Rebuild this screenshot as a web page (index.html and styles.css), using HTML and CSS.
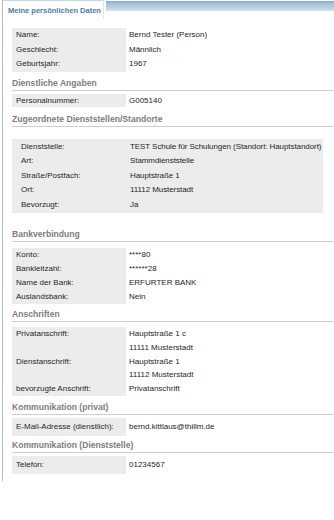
FILE: index.html
```html
<!DOCTYPE html>
<html lang="de">
<head>
<meta charset="utf-8">
<title>Meine persönlichen Daten</title>
<link rel="stylesheet" href="styles.css">
</head>
<body>
<div class="panel">
  <div class="tabbar">
    <div class="tab">Meine persönlichen Daten</div>
    <div class="tabfill"></div>
  </div>
  <div class="content">
    <div class="kv kv-first">
      <div class="k">Name:</div><div class="v">Bernd Tester (Person)</div>
      <div class="k">Geschlecht:</div><div class="v">Männlich</div>
      <div class="k">Geburtsjahr:</div><div class="v">1967</div>
    </div>

    <h2 class="sec sec-1">Dienstliche Angaben</h2>
    <div class="kv kv-short">
      <div class="k">Personalnummer:</div><div class="v">G005140</div>
    </div>

    <h2 class="sec sec-2">Zugeordnete Dienststellen/Standorte</h2>
    <div class="kv kv-full">
      <div class="k">Dienststelle:</div><div class="v">TEST Schule für Schulungen (Standort: Hauptstandort)</div>
      <div class="k">Art:</div><div class="v">Stammdienststelle</div>
      <div class="k">Straße/Postfach:</div><div class="v">Hauptstraße 1</div>
      <div class="k">Ort:</div><div class="v">11112 Musterstadt</div>
      <div class="k">Bevorzugt:</div><div class="v">Ja</div>
    </div>

    <h2 class="sec sec-3">Bankverbindung</h2>
    <div class="kv kv-bank">
      <div class="k">Konto:</div><div class="v">****80</div>
      <div class="k">Bankleitzahl:</div><div class="v">******28</div>
      <div class="k">Name der Bank:</div><div class="v">ERFURTER BANK</div>
      <div class="k">Auslandsbank:</div><div class="v">Nein</div>
    </div>

    <h2 class="sec sec-4">Anschriften</h2>
    <div class="kv kv-addr">
      <div class="k">Privatanschrift:</div><div class="v">Hauptstraße 1 c</div>
      <div class="k"></div><div class="v">11111 Musterstadt</div>
      <div class="k">Dienstanschrift:</div><div class="v">Hauptstraße 1</div>
      <div class="k"></div><div class="v">11112 Musterstadt</div>
      <div class="k">bevorzugte Anschrift:</div><div class="v">Privatanschrift</div>
    </div>

    <h2 class="sec sec-5">Kommunikation (privat)</h2>
    <div class="kv kv-comm">
      <div class="k">E-Mail-Adresse (dienstlich):</div><div class="v">bernd.kittlaus@thillm.de</div>
    </div>

    <h2 class="sec sec-6">Kommunikation (Dienststelle)</h2>
    <div class="kv kv-comm">
      <div class="k">Telefon:</div><div class="v">01234567</div>
    </div>
  </div>
</div>
</body>
</html>
```

FILE: styles.css
```css
html, body {
  margin: 0;
  padding: 0;
  background: #ffffff;
}

body {
  font-family: "Liberation Sans", Arial, sans-serif;
  font-size: 8px;
  color: #262626;
}

.panel {
  margin-left: 2px;
  border-left: 1px solid #a9bfd4;
  padding-bottom: 7px;
}

.tabbar {
  display: flex;
  align-items: flex-start;
  height: 20px;
}

.tab {
  width: 101px;
  height: 19px;
  box-sizing: border-box;
  padding: 5px 0 0 5px;
  font-size: 7.5px;
  font-weight: bold;
  color: #4a7ca8;
  white-space: nowrap;
  border-top: 1px solid #c7d6e4;
  border-right: 1px solid #dbe5ee;
}

.tabfill {
  flex: 1;
  height: 10px;
  margin-top: 1px;
  margin-left: 2px;
  background: linear-gradient(#8eabc6 0, #a9c3da 30%, #bcd2e6 70%, #d2e1ee 100%);
}

.content {
  padding: 8px 0 0 9px;
}

.kv {
  display: grid;
  grid-template-columns: 114px 1fr;
  line-height: 14px;
}

.k {
  background: #ececec;
  padding-left: 4px;
  white-space: nowrap;
}

.v {
  padding-left: 3px;
  white-space: nowrap;
}

.kv-first {
  line-height: 14.5px;
}

.kv-short {
  line-height: 13px;
  margin-top: 3px;
}

.kv-full {
  background: #ececec;
  margin: 12px 11px 0 0;
  padding: 1px 0;
  line-height: 14.5px;
}

.kv-full .k {
  padding-left: 9px;
}

.kv-full .v {
  padding-left: 4px;
  letter-spacing: -0.08px;
}

.kv-bank {
  margin-top: 6px;
}

.kv-addr {
  margin-top: 5px;
  line-height: 13.8px;
}

.kv-comm {
  margin-top: 3px;
}

.kv-comm .k,
.kv-comm .v {
  padding-top: 2px;
  padding-bottom: 2px;
}

.sec {
  margin: 0;
  font-size: 8.6px;
  font-weight: bold;
  color: #7d7d7d;
  line-height: 12px;
  padding-bottom: 1px;
  border-bottom: 1px solid #cfcfcf;
}

.sec-1 { margin-top: 5px; }
.sec-2 { margin-top: 6px; }
.sec-3 { margin-top: 15px; }
.sec-4 { margin-top: 4px; }
.sec-5 { margin-top: 5px; }
.sec-6 { margin-top: 3px; }
```
